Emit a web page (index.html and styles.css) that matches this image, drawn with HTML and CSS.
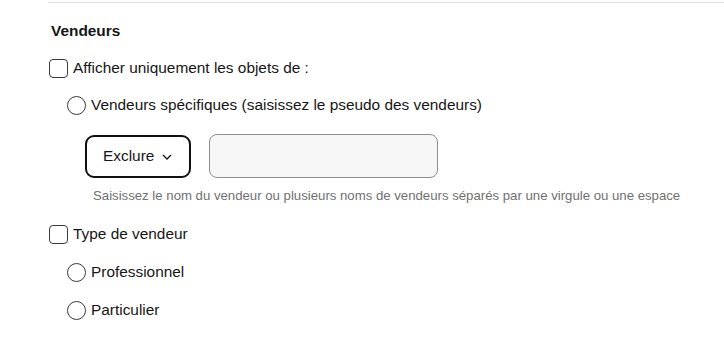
FILE: index.html
```html
<!DOCTYPE html>
<html lang="fr">
<head>
<meta charset="utf-8">
<title>Vendeurs</title>
<link rel="stylesheet" href="styles.css">
</head>
<body>
<div class="panel">
  <div class="rule"></div>
  <h3 class="heading">Vendeurs</h3>
  <label class="row check-row">
    <span class="checkbox"></span>
    <span class="label">Afficher uniquement les objets de :</span>
  </label>
  <label class="row radio-row first-radio">
    <span class="radio"></span>
    <span class="label">Vendeurs spécifiques (saisissez le pseudo des vendeurs)</span>
  </label>
  <div class="seller-fields">
    <button class="select-btn" type="button">Exclure
      <svg class="chevron" width="10" height="6" viewBox="0 0 10 6"><path d="M1 1 L5 5 L9 1" fill="none" stroke="#111" stroke-width="1.3"/></svg>
    </button>
    <div class="text-input"></div>
  </div>
  <p class="help">Saisissez le nom du vendeur ou plusieurs noms de vendeurs séparés par une virgule ou une espace</p>
  <label class="row check-row second-check">
    <span class="checkbox"></span>
    <span class="label">Type de vendeur</span>
  </label>
  <label class="row radio-row sub-radio">
    <span class="radio"></span>
    <span class="label">Professionnel</span>
  </label>
  <label class="row radio-row sub-radio">
    <span class="radio"></span>
    <span class="label">Particulier</span>
  </label>
</div>
</body>
</html>
```
FILE: styles.css
```css
html, body {
  margin: 0;
  padding: 0;
  background: #fff;
}
body {
  font-family: "Liberation Sans", Arial, sans-serif;
  color: #161616;
}
.panel {
  padding: 2px 0 0 48px;
  display: flex;
  flex-direction: column;
  align-items: flex-start;
}
.rule {
  align-self: stretch;
  border-top: 1px solid #e3e3e3;
}
.heading {
  margin: 18px 0 0 3px;
  font-size: 15.4px;
  line-height: 20px;
  font-weight: bold;
}
.row {
  display: flex;
  align-items: center;
  height: 20px;
  font-size: 15.4px;
  line-height: 20px;
  gap: 5px;
}
.check-row {
  margin-top: 17px;
  margin-left: 1px;
}
.radio-row {
  margin-left: 19px;
}
.first-radio {
  margin-top: 17px;
}
.second-check {
  margin-top: 20px;
}
.sub-radio {
  margin-top: 18px;
}
.checkbox {
  width: 17px;
  height: 17px;
  border: 1.5px solid #3a3a3a;
  border-radius: 4px;
  box-sizing: content-box;
  flex: none;
}
.radio {
  width: 17px;
  height: 17px;
  border: 1.5px solid #3a3a3a;
  border-radius: 50%;
  flex: none;
}
.seller-fields {
  display: flex;
  align-items: center;
  gap: 18px;
  margin: 19px 0 0 37px;
}
.select-btn {
  width: 106px;
  height: 43px;
  border: 2px solid #111;
  border-radius: 9px;
  background: #fff;
  font-family: "Liberation Sans", Arial, sans-serif;
  font-size: 15.4px;
  color: #161616;
  padding: 0 0 0 16px;
  display: flex;
  align-items: center;
  gap: 8px;
  box-sizing: border-box;
}
.chevron {
  margin-top: 2px;
}
.text-input {
  width: 229px;
  height: 44px;
  border: 1px solid #8f8f8f;
  border-radius: 8px;
  background: #f7f7f7;
  box-sizing: border-box;
}
.help {
  margin: 10px 0 0 45px;
  font-size: 13.2px;
  line-height: 16px;
  color: #707070;
}
```
